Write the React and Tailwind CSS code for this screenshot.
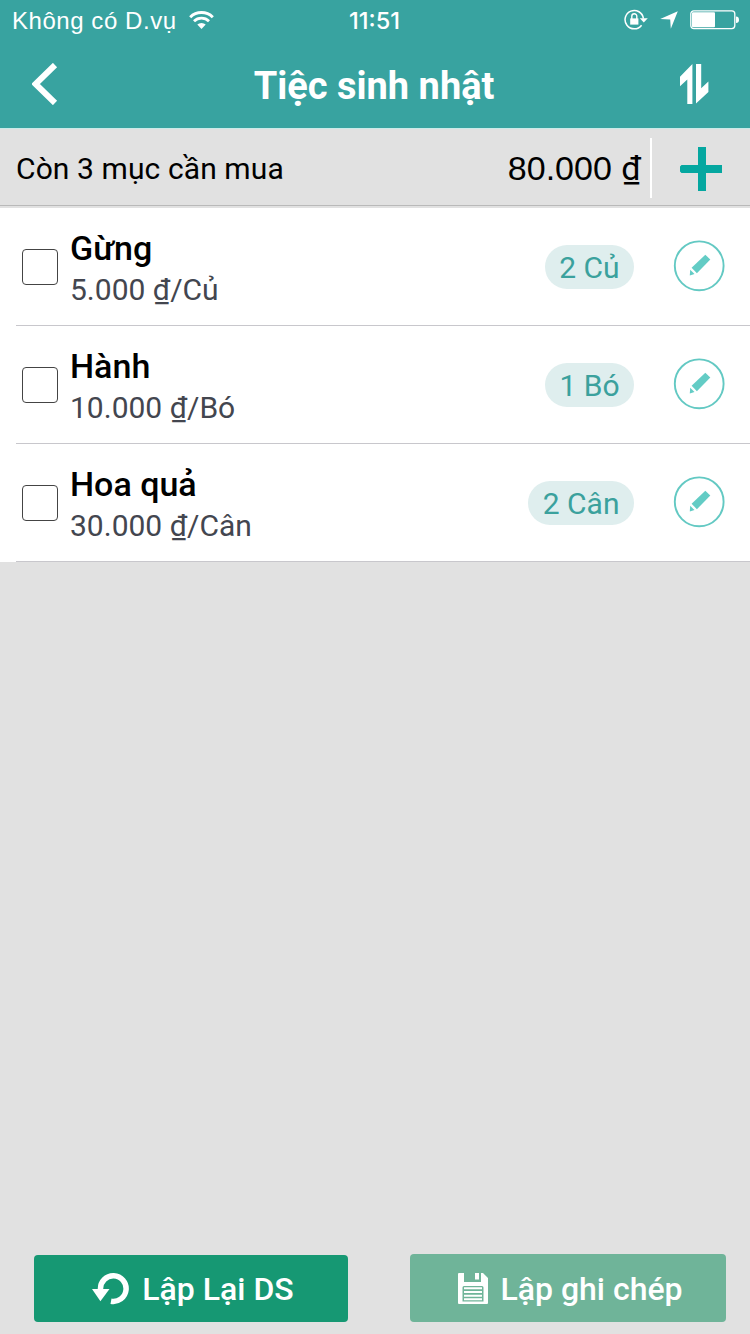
const items = [
  { id: 1, name: 'Gừng', price: '5.000 ₫/Củ', qty: '2 Củ' },
  { id: 2, name: 'Hành', price: '10.000 ₫/Bó', qty: '1 Bó' },
  { id: 3, name: 'Hoa quả', price: '30.000 ₫/Cân', qty: '2 Cân' },
]

const WifiIcon = () => (
  <svg className="ml-[12px] h-[18px] w-[25px]" viewBox="0 0 25 18" fill="none">
    <path d="M1.2 6.2a16.2 16.2 0 0 1 22.6 0" stroke="#fff" strokeWidth="3" />
    <path d="M5 10.2a10.7 10.7 0 0 1 15 0" stroke="#fff" strokeWidth="2.8" />
    <path d="M12.5 18l-4.2-4.4a6 6 0 0 1 8.4 0z" fill="#fff" />
  </svg>
)

const RotationLockIcon = () => (
  <svg className="h-[22px] w-[24px]" viewBox="0 0 24 22" fill="none">
    <path d="M17.6 16.2A9.2 9.2 0 1 1 19.4 9.6" stroke="#fff" strokeWidth="1.5" />
    <path d="M15.8 9.2h8l-4 4.4z" fill="#fff" />
    <rect x="6.2" y="9.4" width="8.2" height="6.2" fill="#fff" />
    <path d="M7.8 10V7.3a2.5 2.5 0 0 1 5 0V10" stroke="#fff" strokeWidth="1.4" />
  </svg>
)

const LocationIcon = () => (
  <svg className="ml-[12px] h-[18px] w-[18px]" viewBox="0 0 18 18" fill="#fff">
    <path d="M17.8.2L10.8 17.8l-.6-9.3L.2 8z" />
  </svg>
)

const BatteryIcon = () => (
  <svg className="ml-[12px] h-[20px] w-[49px]" viewBox="0 0 49 20" fill="none">
    <rect x=".8" y=".8" width="44" height="17.8" rx="3" stroke="#fff" strokeWidth="1.3" />
    <rect x="2" y="2.2" width="23" height="15" rx="1" fill="#fff" />
    <path d="M46 6.5c2 0 3 1.2 3 3.3s-1 3.2-3 3.2z" fill="#fff" />
  </svg>
)

const SortIcon = () => (
  <svg className="h-[40px] w-[29px]" viewBox="0 0 29 40" fill="#fff">
    <path d="M12.4 0v40H7.3V15.5L0 22.3V12.8z" />
    <path d="M16 0h5.2v24.2l7.2-6.7V28L16 39.5z" />
  </svg>
)

const PencilIcon = () => (
  <svg className="h-[52px] w-[52px]" viewBox="0 0 52 52">
    <circle cx="26.2" cy="25.8" r="24.4" fill="none" stroke="#63c9c3" strokeWidth="1.9" />
    <path d="M32.3 14.8l5 4.6-13.4 13.8-5.300-5.400z" fill="#63ccc5" />
    <path d="M17.2 29.800l4.300 4.300-4.700 1.300z" fill="#63ccc5" />
  </svg>
)

const RepeatIcon = () => (
  <svg className="h-[32px] w-[37px]" viewBox="0 0 37 32" fill="none">
    <path d="M8.5 16A12.8 12.8 0 1 1 19 28.2" stroke="#fff" strokeWidth="5.5" />
    <path d="M0 16h17.5L8.4 28.3z" fill="#fff" />
  </svg>
)

const SaveIcon = () => (
  <svg className="h-[31px] w-[30px]" viewBox="0 0 30 31" fill="#fff">
    <path
      fillRule="evenodd"
      d="M1 0h5v9h17V0h2l5 5v25a1 1 0 0 1-1 1H1a1 1 0 0 1-1-1V1a1 1 0 0 1 1-1zM6 13a1.5 1.5 0 0 0-1.500 1.500v14h21v-14A1.500 1.500 0 0 0 24 13z"
    />
    <path d="M17 0h4v6.5h-4zM6 14.3h18v2H6zM6 18h18v2H6zM6 21.7h18v2H6zM6 25.3h18v2H6z" />
  </svg>
)

function StatusBar() {
  return (
    <div className="grid h-10 grid-cols-3 items-center pr-[11px] pl-[12px] font-['Liberation_Sans',sans-serif]">
      <div className="flex items-center">
        <span className="pt-[2px] text-[24px] leading-[38px] tracking-[0.55px] whitespace-nowrap">Không có D.vụ</span>
        <WifiIcon />
      </div>
      <span className="pt-[2px] pr-[2px] text-center font-['Inter',sans-serif] text-[23.5px] leading-[38px] font-medium">
        11:51
      </span>
      <div className="flex items-center justify-end">
        <RotationLockIcon />
        <LocationIcon />
        <BatteryIcon />
      </div>
    </div>
  )
}

function NavBar() {
  return (
    <div className="flex h-[88px] items-center pr-[41px] pl-[32px]">
      <svg className="h-[42px] w-[26px]" viewBox="0 0 26 42" fill="none">
        <path d="M23 2L3.5 21 23 40" stroke="#fff" strokeWidth="6" />
      </svg>
      <h1 className="flex-1 pt-1 pl-[10px] text-center text-[38px] leading-none font-bold">Tiệc sinh nhật</h1>
      <SortIcon />
    </div>
  )
}

function Summary() {
  return (
    <div className="border-b-2 border-[#e1e1e1]">
      <div className="flex h-[78px] items-center border-t border-b border-t-[#c9ebe9] border-b-[#b9b9b9] pr-[28px] pl-[16px] text-black">
        <span className="flex-1 pt-[2px] text-[30px] tracking-[0.1px]">Còn 3 mục cần mua</span>
        <span className="pt-[2px] font-['Liberation_Sans',sans-serif] text-[34px] leading-[44px]">
          80.000 <span className="font-['Roboto',sans-serif]">₫</span>
        </span>
        <span className="mt-[2px] ml-[9px] h-[60px] w-[2px] bg-white" />
        <svg className="mt-1 ml-[28px] h-[44px] w-[42px]" viewBox="0 0 42 44" fill="#05a7a0">
          <path d="M18 0h8v18h16v8H26v18h-8V26H1.5L0 24.5v-5L1.5 18H18z" />
        </svg>
      </div>
    </div>
  )
}

function ItemRow({ item }) {
  return (
    <li className="bg-white pl-4">
      <div className="flex h-[118px] items-center border-b border-[#c8c7cc] pr-[25px] pl-[6px]">
        <span className="h-[36px] w-[36px] rounded-[4px] border-[1.5px] border-[#444]" />
        <div className="ml-[12px] flex-1 pt-[3px]">
          <div className="text-[34px] leading-[42px] font-medium text-black">{item.name}</div>
          <div className="text-[30px] leading-[41px] text-[#43464f]">{item.price}</div>
        </div>
        <span className="h-11 rounded-full bg-[#dfeeee] px-[14.5px] text-[30px] leading-[45px] text-[#3ba19d]">
          {item.qty}
        </span>
        <button className="mb-[2px] ml-[39px]">
          <PencilIcon />
        </button>
      </div>
    </li>
  )
}

export default function App() {
  return (
    <div className="flex h-[1334px] w-[750px] flex-col bg-[#e1e1e1] font-['Roboto',sans-serif]">
      <header className="bg-[#38a3a0] text-white">
        <StatusBar />
        <NavBar />
      </header>
      <Summary />
      <ul>
        {items.map((item) => (
          <ItemRow key={item.id} item={item} />
        ))}
      </ul>
      <footer className="mt-auto flex items-center justify-between pr-[24px] pb-[12px] pl-[34px] text-[32px] text-white">
        <button className="flex h-[67px] w-[314px] items-center justify-center gap-[13px] rounded-[4px] bg-[#169873] pt-px pl-[4px] font-medium">
          <RepeatIcon />
          Lập Lại DS
        </button>
        <button className="flex h-[68px] w-[316px] items-center justify-center gap-[12px] rounded-[4px] bg-[#6fb499] pt-px pl-[5px] font-medium">
          <SaveIcon />
          Lập ghi chép
        </button>
      </footer>
    </div>
  )
}
